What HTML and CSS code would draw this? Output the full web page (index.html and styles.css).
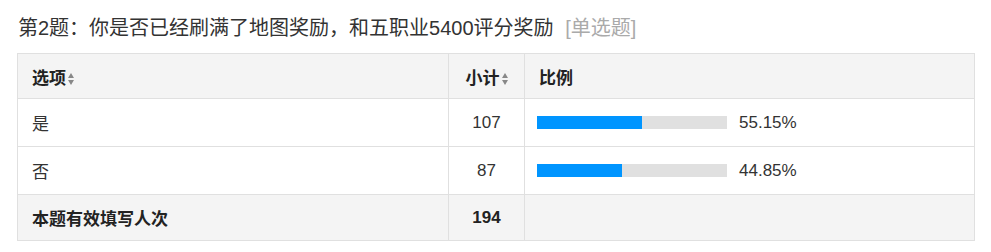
FILE: index.html
```html
<!DOCTYPE html>
<html lang="zh-CN">
<head>
<meta charset="utf-8">
<link rel="stylesheet" href="styles.css">
</head>
<body>
<div class="question">
  <div class="q-title">第2题：你是否已经刷满了地图奖励，和五职业5400评分奖励 <span class="q-type">[单选题]</span></div>
  <table class="stats">
    <thead>
      <tr>
        <th class="col-opt">选项<span class="sort"></span></th>
        <th class="col-cnt">小计<span class="sort"></span></th>
        <th class="col-pct">比例</th>
      </tr>
    </thead>
    <tbody>
      <tr>
        <td class="col-opt">是</td>
        <td class="col-cnt">107</td>
        <td class="col-pct"><div class="pct"><div class="bar"><div class="fill" style="width:55.15%"></div></div><span class="pct-val">55.15%</span></div></td>
      </tr>
      <tr>
        <td class="col-opt">否</td>
        <td class="col-cnt">87</td>
        <td class="col-pct"><div class="pct"><div class="bar"><div class="fill" style="width:44.85%"></div></div><span class="pct-val">44.85%</span></div></td>
      </tr>
      <tr class="total">
        <td class="col-opt">本题有效填写人次</td>
        <td class="col-cnt">194</td>
        <td class="col-pct"></td>
      </tr>
    </tbody>
  </table>
</div>
</body>
</html>
```
FILE: styles.css
```css
html, body {
  margin: 0;
  padding: 0;
  background: #fff;
}
body {
  font-family: "Liberation Sans", Arial, "Noto Sans CJK SC", sans-serif;
  color: #333;
}
.question {
  padding: 14px 17px 0 17px;
}
.q-title {
  font-size: 20px;
  line-height: 28px;
  color: #333;
  padding-left: 1px;
  margin-bottom: 11px;
}
.q-type {
  color: #aaa;
  margin-left: 6px;
}
.stats {
  width: 958px;
  border-collapse: collapse;
  font-size: 17px;
  table-layout: fixed;
}
.stats th, .stats td {
  box-sizing: border-box;
  border: 1px solid #e0e0e0;
  padding: 0 13px 0 14px;
  text-align: left;
  color: #333;
}
.stats th {
  background: #f4f4f4;
  font-weight: bold;
  height: 45px;
  color: #222;
}
.stats td {
  height: 48px;
}
.stats tr.total td {
  background: #f4f4f4;
  font-weight: bold;
  height: 46px;
  color: #222;
}
.col-opt { width: 431px; }
.col-cnt { width: 76px; }
.stats th.col-cnt, .stats td.col-cnt {
  text-align: center;
  padding: 0;
}
.stats td.col-pct {
  padding-left: 12px;
}
.sort {
  display: inline-block;
  position: relative;
  width: 6px;
  height: 12px;
  margin-left: 2px;
  vertical-align: -1px;
}
.sort::before, .sort::after {
  content: "";
  position: absolute;
  left: 0;
  border-left: 3px solid transparent;
  border-right: 3px solid transparent;
}
.sort::before {
  top: 0;
  border-bottom: 5px solid #888;
}
.sort::after {
  bottom: 0;
  border-top: 5px solid #888;
}
.pct {
  display: flex;
  align-items: center;
}
.bar {
  width: 190px;
  height: 13px;
  background: #e0e0e0;
}
.fill {
  height: 100%;
  background: #0095ff;
}
.pct-val {
  margin-left: 12px;
  color: #333;
}
```
